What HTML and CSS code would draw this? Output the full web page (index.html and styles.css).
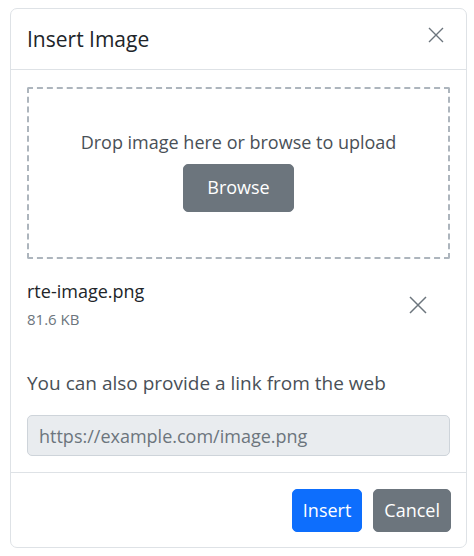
FILE: index.html
```html
<!DOCTYPE html>
<html lang="en">
<head>
<meta charset="utf-8">
<title>Insert Image</title>
<link rel="stylesheet" href="styles.css">
</head>
<body>
<div class="modal">
  <div class="modal-header">
    <h5 class="modal-title">Insert Image</h5>
    <button class="btn-close" type="button" aria-label="Close">
      <svg viewBox="0 0 16 16" width="16" height="16"><path d="M1 1L15 15M15 1L1 15" stroke="currentColor" stroke-width="1.4" fill="none"/></svg>
    </button>
  </div>
  <div class="modal-body">
    <div class="dropzone">
      <p class="drop-text">Drop image here or browse to upload</p>
      <button class="btn btn-secondary btn-browse" type="button">Browse</button>
    </div>
    <div class="file-row">
      <div class="file-info">
        <div class="file-name">rte-image.png</div>
        <div class="file-size">81.6 KB</div>
      </div>
      <button class="file-remove" type="button" aria-label="Remove">
        <svg viewBox="0 0 18 18" width="18" height="18"><path d="M1 1L17 17M17 1L1 17" stroke="currentColor" stroke-width="1.5" fill="none"/></svg>
      </button>
    </div>
    <p class="link-text">You can also provide a link from the web</p>
    <input class="form-control" type="text" placeholder="https://example.com/image.png">
  </div>
  <div class="modal-footer">
    <button class="btn btn-primary" type="button">Insert</button>
    <button class="btn btn-secondary" type="button">Cancel</button>
  </div>
</div>
</body>
</html>
```
FILE: styles.css
```css
* { box-sizing: border-box; }
body {
  margin: 0;
  background: #fff;
  font-family: "Open Sans", "Noto Sans", sans-serif;
  color: #212529;
}
.modal {
  margin: 8px 0 0 10px;
  width: 457px;
  border: 1px solid #dee2e6;
  border-radius: 7px;
  background: #fff;
}
.modal-header {
  display: flex;
  align-items: flex-start;
  justify-content: space-between;
  height: 61px;
  padding: 0 22px 0 16px;
  border-bottom: 1px solid #dee2e6;
}
.modal-title {
  margin: 0;
  font-size: 21px;
  font-weight: 500;
  line-height: 28px;
  padding-top: 16px;
  color: #212529;
}
.btn-close {
  margin-top: 18px;
  padding: 0;
  border: 0;
  background: none;
  width: 16px;
  height: 16px;
  color: #6c757d;
  display: flex;
}
.modal-body {
  padding: 17px 16px 16px;
}
.dropzone {
  border: 2px dashed #adb5bd;
  border-radius: 2px;
  padding: 40px 16px 45px;
  display: flex;
  flex-direction: column;
  align-items: center;
  gap: 8px;
}
.drop-text {
  margin: 0;
  font-size: 18px;
  line-height: 27px;
  color: #495057;
}
.btn {
  font-family: inherit;
  font-size: 18px;
  line-height: 27px;
  border: 1px solid transparent;
  border-radius: 5px;
  padding: 7px 10px;
  color: #fff;
}
.btn-secondary { background: #6c757d; border-color: #6c757d; }
.btn-primary { background: #0d6efd; border-color: #0d6efd; }
.btn-browse {
  padding: 9px 23px 10px;
}
.file-row {
  display: flex;
  align-items: center;
  justify-content: space-between;
  margin-top: 19px;
  padding-right: 23px;
}
.file-name {
  font-size: 18px;
  line-height: 27px;
  color: #212529;
  margin-bottom: 4px;
}
.file-size {
  font-size: 15px;
  line-height: 21px;
  color: #6c757d;
}
.file-remove {
  padding: 0;
  border: 0;
  background: none;
  color: #6c757d;
  display: flex;
  margin-top: 2px;
}
.link-text {
  margin: 40px 0 18px;
  font-size: 19px;
  line-height: 27px;
  color: #495057;
}
.form-control {
  display: block;
  width: 100%;
  height: 41px;
  padding: 6px 11px;
  font-family: inherit;
  font-size: 18px;
  border: 1px solid #ced4da;
  border-radius: 5px;
  background: #e9ecef;
  color: #212529;
}
.form-control::placeholder { color: #6c757d; }
.modal-footer {
  display: flex;
  justify-content: flex-end;
  gap: 11px;
  padding: 16px 15px 15px;
  border-top: 1px solid #dee2e6;
}
```
